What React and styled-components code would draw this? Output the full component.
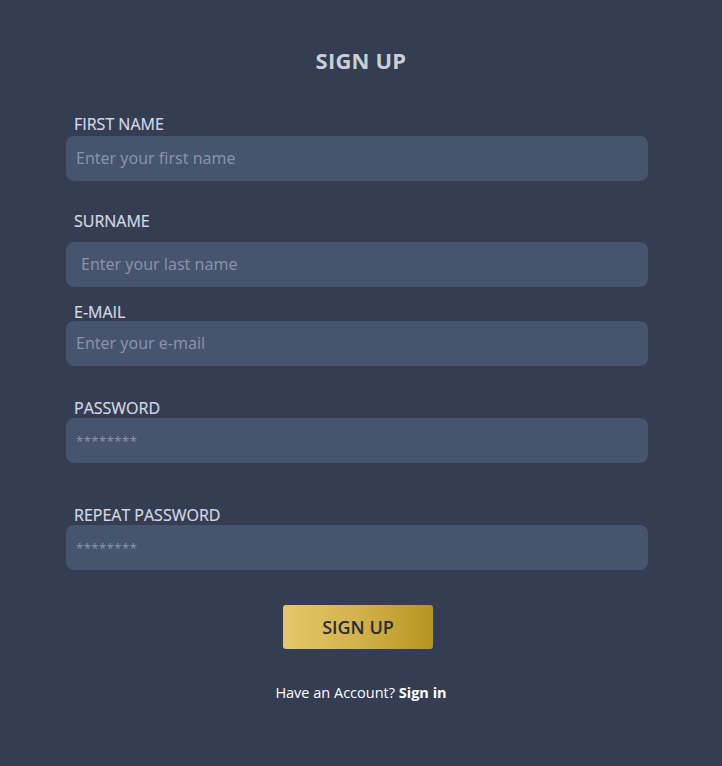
import React from "react";
import styled, { createGlobalStyle } from "styled-components";

const GlobalStyle = createGlobalStyle`
  html, body {
    margin: 0;
    padding: 0;
    background: #343d52;
  }
  body {
    font-family: "Open Sans", "Noto Sans", sans-serif;
  }
`;

const fields = [
  { id: "first", label: "FIRST NAME", placeholder: "Enter your first name", gap: 0, labelGap: 2, indent: 10 },
  { id: "surname", label: "SURNAME", placeholder: "Enter your last name", gap: 31, labelGap: 11, indent: 15 },
  { id: "email", label: "E-MAIL", placeholder: "Enter your e-mail", gap: 16, labelGap: -1, indent: 10 },
  { id: "password", label: "PASSWORD", placeholder: "********", gap: 33, labelGap: 0, indent: 10, password: true },
  { id: "repeat", label: "REPEAT PASSWORD", placeholder: "********", gap: 43, labelGap: 0, indent: 10, password: true },
];

const SignUp = () => {
  return (
    <Page>
      <GlobalStyle />
      <Title>SIGN UP</Title>
      <Form onSubmit={(e) => e.preventDefault()}>
        {fields.map((f) => (
          <Field key={f.id} $gap={f.gap}>
            <Label htmlFor={f.id} $labelGap={f.labelGap}>
              {f.label}
            </Label>
            <Input
              id={f.id}
              type="text"
              placeholder={f.placeholder}
              $indent={f.indent}
              $password={f.password}
            />
          </Field>
        ))}
        <SubmitButton type="submit">SIGN UP</SubmitButton>
      </Form>
      <Footer>
        Have an Account? <strong>Sign in</strong>
      </Footer>
    </Page>
  );
};

const Page = styled.div`
  width: 722px;
  min-height: 766px;
  box-sizing: border-box;
  padding: 45px 74px 0 66px;
  background: #343d52;
`;

const Title = styled.h1`
  margin: 0 0 40px;
  padding-left: 8px;
  text-align: center;
  font-size: 22px;
  line-height: 30px;
  font-weight: 700;
  color: #c9ceda;
  letter-spacing: 0.2px;
`;

const Form = styled.form`
  display: flex;
  flex-direction: column;
`;

const Field = styled.div`
  display: flex;
  flex-direction: column;
  margin-top: ${(p) => p.$gap}px;
`;

const Label = styled.label`
  padding-left: 8px;
  margin-bottom: ${(p) => p.$labelGap}px;
  font-size: 16px;
  line-height: 19px;
  font-weight: 500;
  color: #d6dae4;
  -webkit-text-stroke: 0.2px #d6dae4;
`;

const Input = styled.input`
  box-sizing: border-box;
  width: 100%;
  height: 45px;
  border: none;
  outline: none;
  border-radius: 8px;
  background: #47546e;
  padding: 0 0 2px ${(p) => p.$indent}px;
  font-family: "Noto Sans", sans-serif;
  font-size: 16px;
  color: #dfe3ec;

  &::placeholder {
    color: #8792a9;
    font-size: ${(p) => (p.$password ? "13px" : "16px")};
    letter-spacing: ${(p) => (p.$password ? "0.5px" : "0")};
  }
`;

const SubmitButton = styled.button`
  align-self: center;
  margin: 35px 0 0 2px;
  width: 150px;
  height: 44px;
  border: none;
  border-radius: 3px;
  background: linear-gradient(90deg, #e3c86a 0%, #d3b24b 50%, #b7951f 100%);
  font-family: "Open Sans", sans-serif;
  font-size: 18px;
  font-weight: 600;
  color: #272d3b;
  cursor: pointer;
`;

const Footer = styled.p`
  margin: 34px 0 0;
  padding-left: 8px;
  text-align: center;
  font-size: 14.5px;
  line-height: 20px;
  color: #ffffff;

  strong {
    font-weight: 700;
  }
`;

export default SignUp;
